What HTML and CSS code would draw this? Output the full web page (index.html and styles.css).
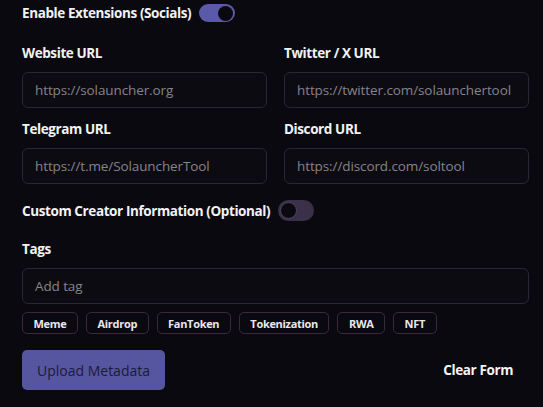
FILE: index.html
```html
<!DOCTYPE html>
<html>
<head>
<meta charset="utf-8">
<link rel="stylesheet" href="styles.css">
</head>
<body>
<div class="form">
  <div class="toggle-row">
    <span class="toggle-label">Enable Extensions (Socials)</span>
    <span class="switch on"><span class="knob"></span></span>
  </div>
  <div class="grid">
    <div class="field">
      <label class="label">Website URL</label>
      <div class="input">https://solauncher.org</div>
    </div>
    <div class="field">
      <label class="label">Twitter / X URL</label>
      <div class="input">https://twitter.com/solaunchertool</div>
    </div>
    <div class="field">
      <label class="label">Telegram URL</label>
      <div class="input">https://t.me/SolauncherTool</div>
    </div>
    <div class="field">
      <label class="label">Discord URL</label>
      <div class="input">https://discord.com/soltool</div>
    </div>
  </div>
  <div class="toggle-row creator">
    <span class="toggle-label">Custom Creator Information (Optional)</span>
    <span class="switch off"><span class="knob"></span></span>
  </div>
  <div class="field tags-field">
    <label class="label">Tags</label>
    <div class="input">Add tag</div>
  </div>
  <div class="chips">
    <span class="chip">Meme</span>
    <span class="chip">Airdrop</span>
    <span class="chip">FanToken</span>
    <span class="chip">Tokenization</span>
    <span class="chip">RWA</span>
    <span class="chip">NFT</span>
  </div>
  <div class="actions">
    <button class="upload">Upload Metadata</button>
    <button class="clear">Clear Form</button>
  </div>
</div>
</body>
</html>
```
FILE: styles.css
```css
html, body {
  margin: 0;
  padding: 0;
  background: #0b0910;
}
body {
  font-family: "Open Sans", "Noto Sans", sans-serif;
  color: #f2f2f4;
  width: 543px;
  height: 407px;
  overflow: hidden;
}
.form {
  padding: 4px 14px 0 22px;
  display: flex;
  flex-direction: column;
}
.toggle-row {
  display: flex;
  align-items: center;
  gap: 8px;
  height: 18px;
}
.toggle-label {
  font-weight: 700;
  font-size: 13.5px;
  letter-spacing: -0.4px;
}
.switch {
  width: 36px;
  height: 18px;
  border-radius: 9px;
  display: flex;
  align-items: center;
  padding: 0 2px;
  box-sizing: border-box;
}
.switch .knob {
  width: 15px;
  height: 15px;
  border-radius: 50%;
  background: #0b0910;
  box-sizing: border-box;
}
.switch.on {
  background: #5a5aa8;
  justify-content: flex-end;
}
.switch.off {
  height: 21px;
  border-radius: 11px;
  background: #3a3148;
  justify-content: flex-start;
}
.switch.off .knob {
  width: 17px;
  height: 17px;
  border: 1px solid #4e4560;
}
.grid {
  display: grid;
  grid-template-columns: minmax(0, 1fr) minmax(0, 1fr);
  column-gap: 17px;
  row-gap: 11px;
  margin-top: 21px;
}
.field {
  display: flex;
  flex-direction: column;
  min-width: 0;
}
.label {
  font-weight: 700;
  font-size: 13.5px;
  letter-spacing: -0.4px;
  height: 20px;
  line-height: 20px;
  margin-bottom: 9px;
}
.input {
  height: 36px;
  box-sizing: border-box;
  border: 1px solid #2a2632;
  border-radius: 6px;
  background: #0d0b12;
  color: #85838c;
  font-size: 13.5px;
  padding: 0 12px;
  display: flex;
  align-items: center;
  letter-spacing: -0.1px;
  white-space: nowrap;
  overflow: hidden;
}
.creator {
  margin-top: 16px;
  height: 21px;
}
.tags-field {
  margin-top: 18px;
}
.chips {
  display: flex;
  gap: 8px;
  margin-top: 8px;
}
.chip {
  height: 22px;
  box-sizing: border-box;
  border: 1px solid #3b2838;
  border-radius: 5px;
  padding: 0 10.5px;
  font-size: 11px;
  font-weight: 700;
  letter-spacing: -0.3px;
  display: flex;
  align-items: center;
  color: #e8e8ec;
}
.actions {
  display: flex;
  justify-content: space-between;
  align-items: center;
  margin-top: 16px;
}
.upload {
  width: 143px;
  height: 40px;
  border: none;
  border-radius: 5px;
  background: #5656a0;
  color: #1a1a3a;
  font-family: inherit;
  font-size: 14px;
  padding: 0;
}
.clear {
  background: none;
  border: none;
  color: #f4f4f6;
  font-family: inherit;
  font-size: 13.5px;
  font-weight: 700;
  margin-right: 16px;
  padding: 0;
  letter-spacing: -0.4px;
}
```
